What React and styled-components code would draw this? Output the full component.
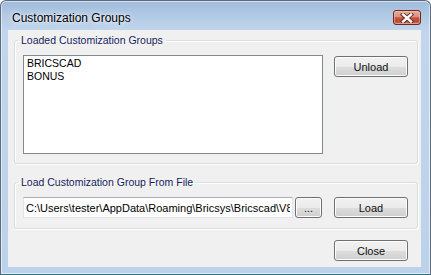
import React from "react";
import styled, { createGlobalStyle } from "styled-components";

const Global = createGlobalStyle`
  html, body { margin: 0; padding: 0; background: #ffffff; }
  body { font-family: "Liberation Sans", Arial, sans-serif; }
`;

const Window = styled.div`
  box-sizing: border-box;
  width: 431px;
  height: 275px;
  display: flex;
  flex-direction: column;
  border: 1px solid #5d6b7a;
  border-bottom-color: #2f6f80;
  border-radius: 6px 6px 0 0;
  background: linear-gradient(180deg, #a0bbdc 0px, #b1c9e4 14px, #c1d6ec 30px, #bcd2ea 100%);
  box-shadow: inset 0 0 0 1px rgba(255, 255, 255, 0.55);
  overflow: hidden;
`;

const TitleBar = styled.div`
  height: 29px;
  box-sizing: border-box;
  padding: 4px 9px 0 11px;
  display: flex;
  align-items: center;
  justify-content: space-between;
  flex: none;
`;

const Title = styled.span`
  font-family: "Liberation Sans", Arial, sans-serif;
  font-size: 12px;
  color: #000;
  text-shadow: 0 0 6px rgba(255, 255, 255, 0.9), 0 0 3px rgba(255, 255, 255, 0.8);
`;

const CloseBox = styled.button`
  box-sizing: border-box;
  width: 28px;
  height: 15px;
  padding: 0;
  border: 1px solid #6a2a24;
  border-radius: 3px;
  background: linear-gradient(180deg, #e7aa9b 0%, #d9907f 45%, #c6523c 52%, #c04a35 80%, #d07662 100%);
  box-shadow: inset 0 0 0 1px rgba(255, 210, 200, 0.45);
  display: flex;
  align-items: center;
  justify-content: center;
`;

const Client = styled.div`
  flex: 1;
  margin: 0 9px 7px 7px;
  background: #f0f0f0;
  box-sizing: border-box;
  padding: 4px 3px 6px 6px;
  display: flex;
  flex-direction: column;
`;

const Group = styled.fieldset`
  margin: 0 0 ${(p) => p.$gap}px 0;
  padding: 0;
  border: 1px solid #d5dfe5;
  border-radius: 3px;
  box-shadow: inset 1px 1px 0 #ffffff, 1px 1px 0 #ffffff;
  min-width: 0;
`;

const Legend = styled.legend`
  margin-left: 3px;
  padding: 0 3px;
  font-size: 10.5px;
  line-height: 12px;
  color: #15225e;
`;

const GroupBody = styled.div`
  display: flex;
  align-items: flex-start;
  padding: 9px 9px ${(p) => p.$bottom}px 8px;
`;

const ListBox = styled.div`
  box-sizing: border-box;
  width: 300px;
  height: 99px;
  border: 1px solid #828790;
  background: #ffffff;
  padding: 1px 3px;
  margin-right: 11px;
`;

const ListItem = styled.div`
  font-size: 10.5px;
  line-height: 13px;
  color: #000;
`;

const TextField = styled.input`
  box-sizing: border-box;
  width: 270px;
  height: 21px;
  margin: 0 2px 0 0;
  padding: 0 2px;
  border: 1px solid #e2e3ea;
  border-top-color: #abadb3;
  background: #ffffff;
  font-family: "Liberation Sans", Arial, sans-serif;
  font-size: 11px;
  color: #000;
  outline: none;
`;

const Button = styled.button`
  box-sizing: border-box;
  width: ${(p) => p.$w || 74}px;
  height: 21px;
  margin-left: ${(p) => p.$ml || 0}px;
  margin-top: ${(p) => p.$mt || 0}px;
  padding: 0;
  border: 1px solid #707070;
  border-radius: 3px;
  background: linear-gradient(180deg, #f2f2f2 0%, #ebebeb 50%, #dddddd 51%, #cfcfcf 100%);
  box-shadow: inset 0 0 0 1px #fcfcfc;
  font-family: "Liberation Sans", Arial, sans-serif;
  font-size: 11px;
  color: #111;
  flex: none;
`;

const Footer = styled.div`
  display: flex;
  justify-content: flex-end;
  padding-right: 10px;
`;

const CloseGlyph = () => (
  <svg width="14" height="10" viewBox="0 0 14 10">
    <path d="M3 1.5 L11 8.5 M11 1.5 L3 8.5" stroke="#5b2a26" strokeWidth="4.2" strokeLinecap="square" fill="none" />
    <path d="M3 1.5 L11 8.5 M11 1.5 L3 8.5" stroke="#ffffff" strokeWidth="2.4" strokeLinecap="square" fill="none" />
  </svg>
);

export default function App() {
  return (
    <>
      <Global />
      <Window>
        <TitleBar>
          <Title>Customization Groups</Title>
          <CloseBox aria-label="Close">
            <CloseGlyph />
          </CloseBox>
        </TitleBar>
        <Client>
          <Group $gap={12}>
            <Legend>Loaded Customization Groups</Legend>
            <GroupBody $bottom={9}>
              <ListBox>
                <ListItem>BRICSCAD</ListItem>
                <ListItem>BONUS</ListItem>
              </ListBox>
              <Button $mt={1}>Unload</Button>
            </GroupBody>
          </Group>
          <Group $gap={11}>
            <Legend>Load Customization Group From File</Legend>
            <GroupBody $bottom={10}>
              <TextField
                readOnly
                value={"C:\\Users\\tester\\AppData\\Roaming\\Bricsys\\Bricscad\\V8x64\\en_US\\Support\\bonus.cui"}
              />
              <Button $w={27}>...</Button>
              <Button $ml={12}>Load</Button>
            </GroupBody>
          </Group>
          <Footer>
            <Button>Close</Button>
          </Footer>
        </Client>
      </Window>
    </>
  );
}
